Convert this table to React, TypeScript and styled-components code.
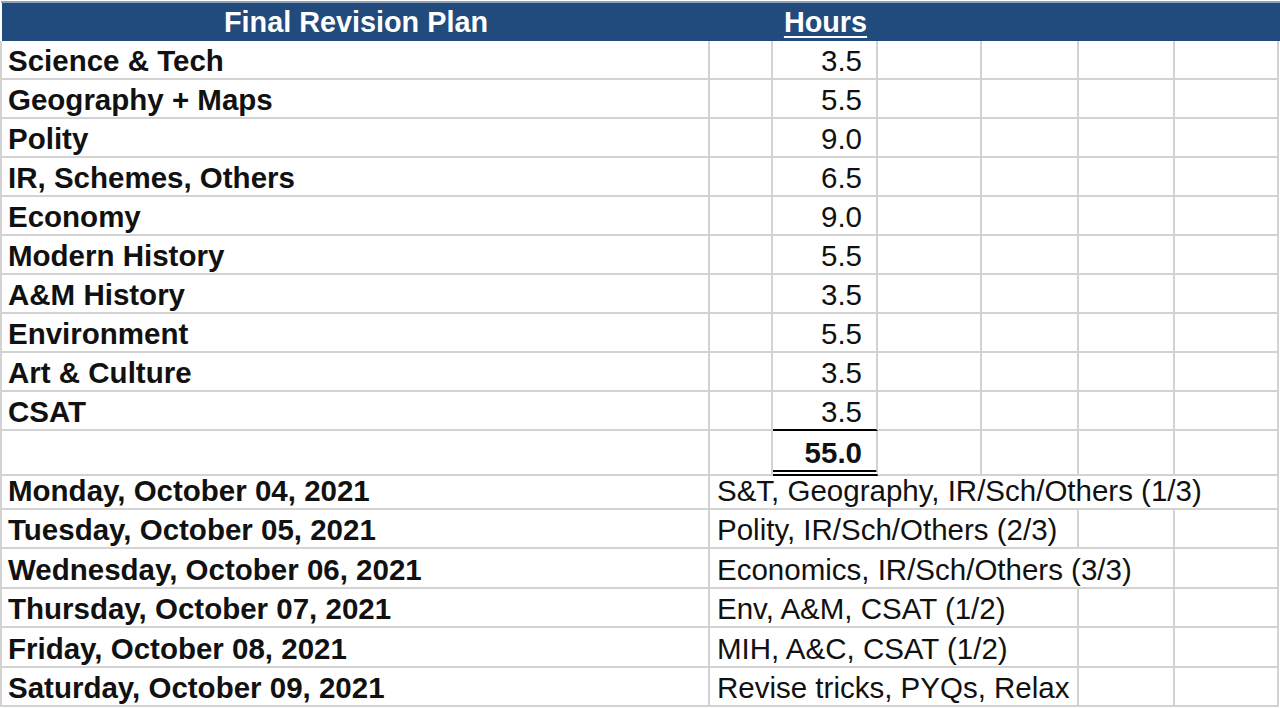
import React from "react";
import styled, { createGlobalStyle, css } from "styled-components";

const GRID = "#d3d3d3";
const COLS = "708px 63px 105px 104px 97px 96px 104px";

const Global = createGlobalStyle`
  html, body { margin: 0; padding: 0; background: #ffffff; }
  body {
    font-family: "Liberation Sans", Arial, Helvetica, sans-serif;
    color: #111111;
    -webkit-font-smoothing: antialiased;
  }
`;

const Sheet = styled.div`
  width: 1279px;
  margin: 1px 0 0 1px;
  border-top: 2px solid #8ea3bb;
`;

const HeaderRow = styled.div`
  display: grid;
  grid-template-columns: ${COLS};
  height: 38px;
  margin-left: 1px;
  background: #214a7d;
  color: #ffffff;
  font-weight: 700;
  font-size: 28.8px;
`;

const HeaderCell = styled.div<{ $col: number }>`
  grid-column: ${(p) => p.$col};
  display: flex;
  align-items: center;
  justify-content: center;
  line-height: 1;
  padding-top: 1px;
`;

const Underlined = styled.span`
  text-decoration: underline;
  text-decoration-thickness: 2px;
  text-underline-offset: 4px;
`;

const Row = styled.div<{ $h: number }>`
  display: grid;
  grid-template-columns: ${COLS};
  height: ${(p) => p.$h}px;
  border-left: 2px solid ${GRID};
  margin-left: -1px;
`;

type Rule = "none" | "single" | "double";

const Cell = styled.div<{
  $span?: number;
  $align?: "left" | "right";
  $bold?: boolean;
  $rule?: Rule;
}>`
  grid-column: span ${(p) => p.$span ?? 1};
  display: flex;
  align-items: center;
  justify-content: ${(p) => (p.$align === "right" ? "flex-end" : "flex-start")};
  box-sizing: border-box;
  border-right: 2px solid ${GRID};
  border-bottom: 2px solid ${GRID};
  font-size: 29.5px;
  font-weight: ${(p) => (p.$bold ? 700 : 400)};
  white-space: nowrap;
  overflow: visible;
  padding: ${(p) => (p.$align === "right" ? "3px 14px 0 0" : "3px 0 0 6px")};
  ${(p) =>
    p.$rule === "single" &&
    css`
      border-bottom: 2px solid #000000;
    `}
  ${(p) =>
    p.$rule === "double" &&
    css`
      border-bottom: 6px double #000000;
      padding-top: 5px;
    `}
`;

const PlanCell = styled(Cell)`
  padding-left: 7px;
`;

const subjects: [string, string][] = [
  ["Science & Tech", "3.5"],
  ["Geography + Maps", "5.5"],
  ["Polity", "9.0"],
  ["IR, Schemes, Others", "6.5"],
  ["Economy", "9.0"],
  ["Modern History", "5.5"],
  ["A&M History", "3.5"],
  ["Environment", "5.5"],
  ["Art & Culture", "3.5"],
  ["CSAT", "3.5"],
];

const plan: { day: string; task: string; span: number; h: number }[] = [
  { day: "Monday, October 04, 2021", task: "S&T, Geography, IR/Sch/Others (1/3)", span: 6, h: 39 },
  { day: "Tuesday, October 05, 2021", task: "Polity, IR/Sch/Others (2/3)", span: 4, h: 39 },
  { day: "Wednesday, October 06, 2021", task: "Economics, IR/Sch/Others (3/3)", span: 5, h: 40 },
  { day: "Thursday, October 07, 2021", task: "Env, A&M, CSAT (1/2)", span: 4, h: 39 },
  { day: "Friday, October 08, 2021", task: "MIH, A&C, CSAT (1/2)", span: 4, h: 40 },
  { day: "Saturday, October 09, 2021", task: "Revise tricks, PYQs, Relax", span: 4, h: 39 },
];

const Blank: React.FC<{ n: number }> = ({ n }) => (
  <>
    {Array.from({ length: n }).map((_, i) => (
      <Cell key={i} />
    ))}
  </>
);

export default function App() {
  return (
    <>
      <Global />
      <Sheet>
        <HeaderRow>
          <HeaderCell $col={1}>Final Revision Plan</HeaderCell>
          <HeaderCell $col={3}>
            <Underlined>Hours</Underlined>
          </HeaderCell>
        </HeaderRow>
        {subjects.map(([name, hrs], i) => (
          <Row key={name} $h={39}>
            <Cell $bold>{name}</Cell>
            <Cell />
            <Cell $align="right" $rule={i === subjects.length - 1 ? "single" : "none"}>
              {hrs}
            </Cell>
            <Blank n={4} />
          </Row>
        ))}
        <Row $h={40}>
          <Cell />
          <Cell />
          <Cell $align="right" $bold $rule="double">
            55.0
          </Cell>
          <Blank n={4} />
        </Row>
        {plan.map((p) => (
          <Row key={p.day} $h={p.h}>
            <Cell $bold>{p.day}</Cell>
            <PlanCell $span={p.span}>{p.task}</PlanCell>
            <Blank n={6 - p.span} />
          </Row>
        ))}
      </Sheet>
    </>
  );
}
